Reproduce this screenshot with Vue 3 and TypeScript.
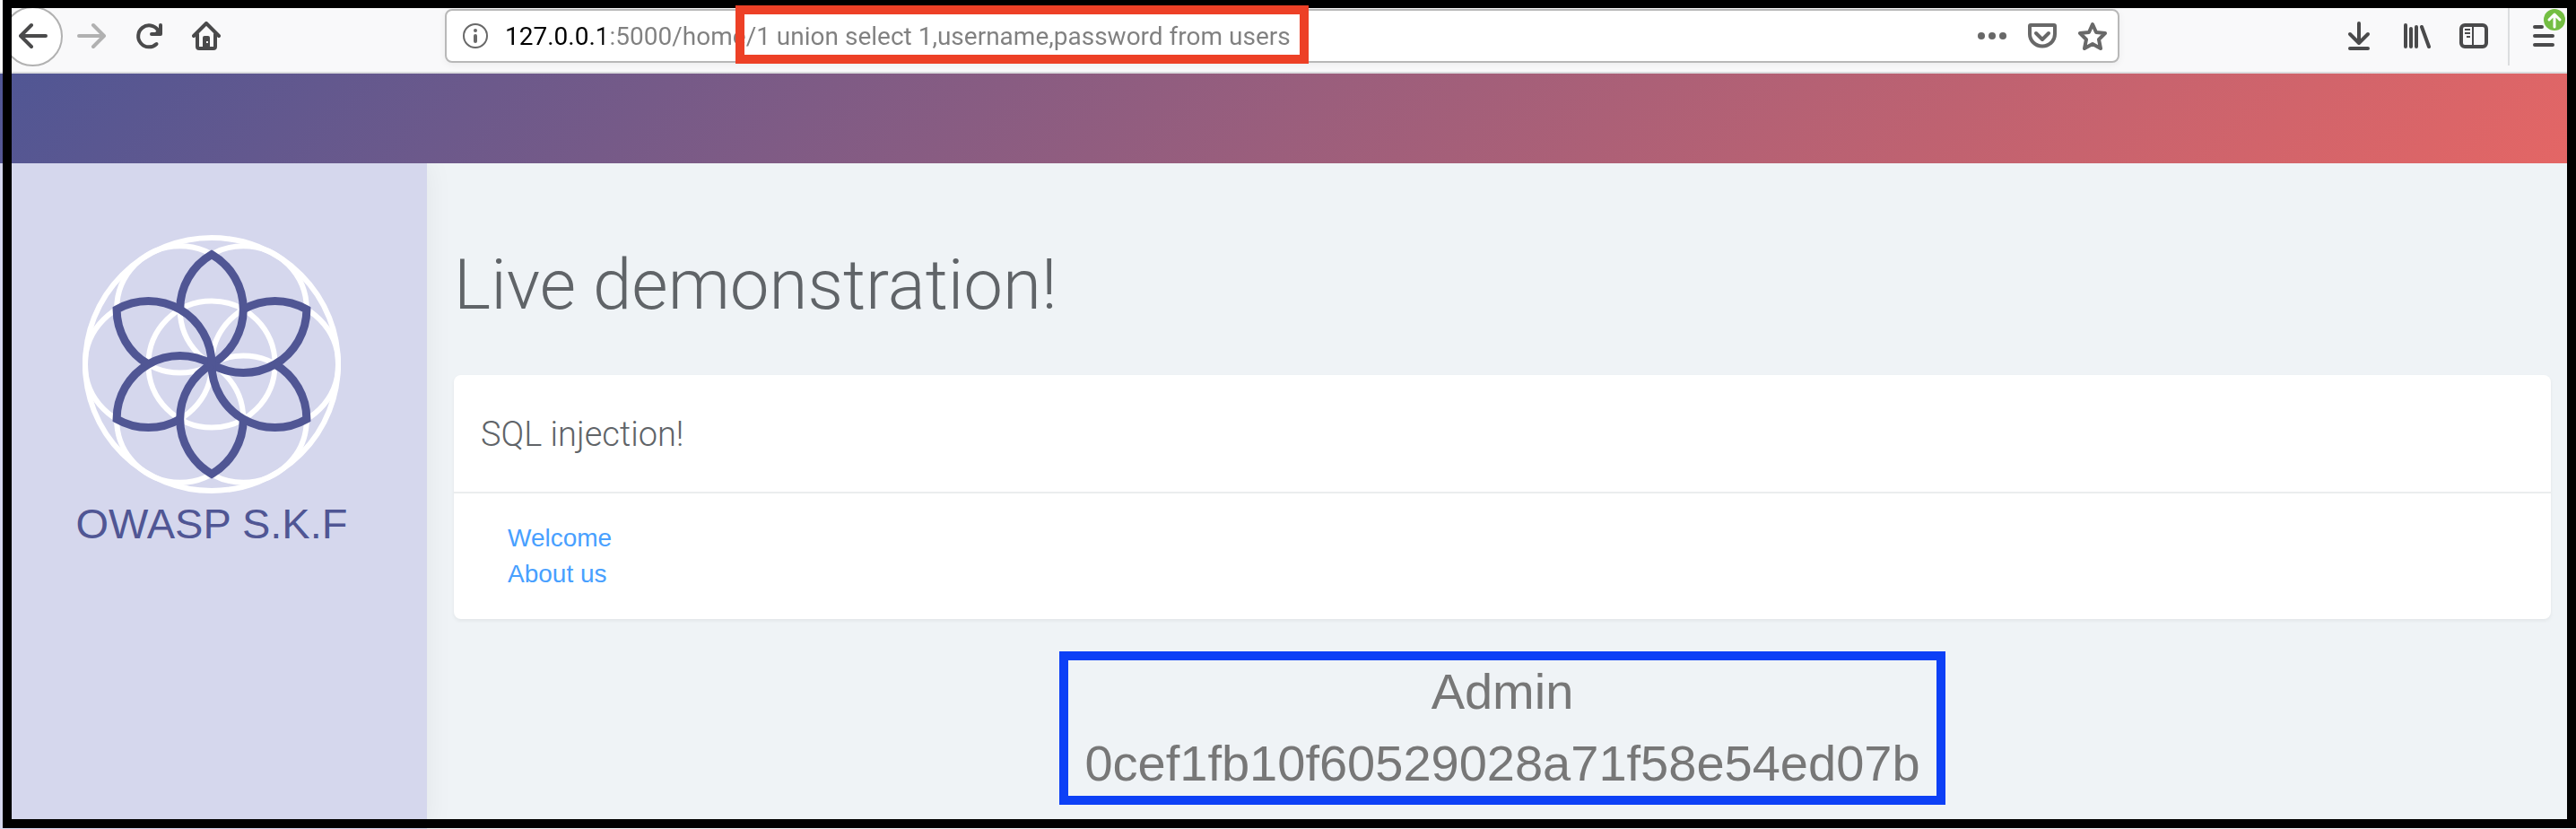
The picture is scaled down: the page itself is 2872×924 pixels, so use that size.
<script setup lang="ts">
import { ref } from 'vue'

interface MenuLink {
  label: string
  href: string
}

const address = ref('127.0.0.1:5000/home/1 union select 1,username,password from users')

const links: MenuLink[] = [
  { label: 'Welcome', href: '#welcome' },
  { label: 'About us', href: '#about' },
]

const record = {
  username: 'Admin',
  password: '0cef1fb10f60529028a71f58e54ed07b',
}

// Geometry of the flower: seven equal circles around one centre.
const radius = 70.6
const angles = [0, 60, 120, 180, 240, 300]
const petals = angles.map((angle) => ({
  angle,
  cx: radius * Math.cos((angle * Math.PI) / 180),
  cy: radius * Math.sin((angle * Math.PI) / 180),
}))
</script>

<template>
  <div class="window">
    <nav class="toolbar" aria-label="Browser toolbar">
      <button class="back" type="button" aria-label="Back">
        <svg class="icon" viewBox="0 0 32 32">
          <path class="line" d="M30 16H3M14 4 2 16l12 12" />
        </svg>
      </button>
      <button class="tool muted" type="button" aria-label="Forward" disabled>
        <svg class="icon" viewBox="0 0 32 32">
          <path class="line" d="M2 16h27M18 4l12 12-12 12" />
        </svg>
      </button>
      <button class="tool" type="button" aria-label="Reload">
        <svg class="icon" viewBox="0 0 32 32">
          <path class="line" d="M24.500 25A12 12 0 1 1 26 9.500M29 4v10H19" />
          <path d="M29 6v8h-8z" />
        </svg>
      </button>
      <button class="tool" type="button" aria-label="Home">
        <svg class="icon" viewBox="0 0 32 32">
          <path class="line" d="M2 16 16 2l14 14M6 14v14a2 2 0 0 0 2 2h16a2 2 0 0 0 2-2V14" />
          <path fill-rule="evenodd" d="M12 29V18a2 2 0 0 1 2-2h4a2 2 0 0 1 2 2v11zM16 22v2h2v-2z" />
        </svg>
      </button>

      <div class="address-bar">
        <button class="info" type="button" aria-label="Site information">
          <svg class="icon" viewBox="0 0 32 32">
            <circle class="thin" cx="16" cy="16" r="13" />
            <circle cx="16" cy="10" r="2" />
            <rect x="14" y="14" width="4" height="10" rx="2" />
          </svg>
        </button>
        <input v-model="address" class="address" type="text" aria-label="Address" spellcheck="false" />
        <button class="action" type="button" aria-label="Page actions">
          <svg class="icon" viewBox="0 0 32 32">
            <circle cx="4" cy="16" r="4" />
            <circle cx="16" cy="16" r="4" />
            <circle cx="28" cy="16" r="4" />
          </svg>
        </button>
        <button class="action" type="button" aria-label="Save to Pocket">
          <svg class="icon" viewBox="0 0 32 32">
            <path class="line" d="M3 4h26a1 1 0 0 1 1 1v9a14 13.500 0 0 1-28 0V5a1 1 0 0 1 1-1z" />
            <path class="line" d="m9 13 7 7 7-7" />
          </svg>
        </button>
        <button class="action" type="button" aria-label="Bookmark this page">
          <svg class="icon" viewBox="0 0 32 32">
            <path class="line" d="m16 3 4 9 10 1-7 7 2 10-9-5-9 5 2-10-7-7 10-1z" />
          </svg>
        </button>
        <span class="mark" aria-hidden="true"></span>
      </div>

      <button class="tool" type="button" aria-label="Downloads">
        <svg class="icon" viewBox="0 0 32 32">
          <path class="line" d="M16 2v22M6 14l10 10 10-10M6 30h20" />
        </svg>
      </button>
      <button class="tool" type="button" aria-label="Library">
        <svg class="icon" viewBox="0 0 32 32">
          <path class="line" d="M4 4v24M10 8v20M16 6v22M22 6l8 22" />
        </svg>
      </button>
      <button class="tool" type="button" aria-label="Sidebars">
        <svg class="icon" viewBox="0 0 32 32">
          <rect class="line" x="2" y="4" width="28" height="24" rx="4" />
          <path class="rule" d="M15 5v22M6 9h6M6 13h6M8 17h4" />
        </svg>
      </button>
      <span class="divider"></span>
      <button class="tool menu" type="button" aria-label="Menu, update available">
        <svg class="icon" viewBox="0 0 32 32">
          <path class="line" d="M6 6h8M6 16h20M6 26h20" />
        </svg>
        <svg class="badge" viewBox="0 0 24 24">
          <circle cx="12" cy="12" r="12" />
          <path d="M12 20V6M6 12l6-6 6 6" />
        </svg>
      </button>
    </nav>

    <header class="banner"></header>

    <div class="page">
      <aside class="sidebar">
        <svg class="logo" viewBox="-144 -144 288 288" role="img" aria-label="Flower logo">
          <g class="rings">
            <circle r="141" />
            <circle :r="radius" />
            <circle v-for="p in petals" :key="p.angle" :cx="p.cx" :cy="p.cy" :r="radius" />
          </g>
          <g class="petals">
            <path
              v-for="p in petals"
              :key="p.angle"
              :transform="`rotate(${p.angle})`"
              d="M0 0A70.600 70.600 0 0 0 0 -122.300A70.600 70.600 0 0 0 -35.300 -61.150"
            />
          </g>
        </svg>
        <div class="brand">OWASP S.K.F</div>
      </aside>

      <main class="content">
        <h1>Live demonstration!</h1>
        <section class="card">
          <h2>SQL injection!</h2>
          <ul>
            <li v-for="link in links" :key="link.label">
              <a :href="link.href">{{ link.label }}</a>
            </li>
          </ul>
        </section>
        <div class="result">
          <p>{{ record.username }}</p>
          <p>{{ record.password }}</p>
        </div>
      </main>
    </div>

    <div class="frame" aria-hidden="true"></div>
  </div>
</template>

<style>
body {
  margin: 0;
}
</style>

<style scoped>
.window {
  position: relative;
  display: flex;
  flex-direction: column;
  min-height: 100vh;
  background: #eff3f6;
  font-family: "Liberation Sans", Arial, sans-serif;
}

.frame {
  position: absolute;
  inset: 0 0 1px 3px;
  border: 10px solid #000;
  border-top-width: 9px;
  pointer-events: none;
}

/* Browser toolbar */
.toolbar {
  display: flex;
  align-items: center;
  height: 80px;
  padding: 0 4px 0 3px;
  border-bottom: 2px solid #dcdddf;
  background: #f9f9fa;
  color: #4a4a4b;
}

button {
  display: flex;
  flex: none;
  align-items: center;
  justify-content: center;
  padding: 0;
  border: 0;
  background: none;
  color: inherit;
}

.icon {
  width: 32px;
  height: 32px;
  fill: currentColor;
}

.line,
.thin,
.rule {
  fill: none;
  stroke: currentColor;
  stroke-width: 4;
  stroke-linecap: round;
  stroke-linejoin: round;
}

.thin,
.rule {
  stroke-width: 2;
}

.rule {
  stroke-linecap: butt;
}

.back {
  box-sizing: border-box;
  width: 67px;
  height: 67px;
  border: 2px solid #b1b1b1;
  border-radius: 50%;
  background: #fff;
}

.tool {
  width: 64px;
  height: 64px;
}

.muted {
  color: #b1b1b1;
}

.address-bar {
  position: relative;
  box-sizing: border-box;
  display: flex;
  flex: 1;
  align-items: center;
  height: 60px;
  margin: 0 235px 0 234px;
  border: 2px solid #b8b8b8;
  border-radius: 8px;
  background: #fff;
  box-shadow: 0 2px 8px rgba(0, 0, 0, 0.06);
  color: #686868;
}

.info {
  width: 64px;
  height: 56px;
}

.address {
  flex: 1;
  min-width: 0;
  height: 56px;
  padding: 0 0 0 1px;
  border: 0;
  outline: 0;
  background: linear-gradient(90deg, #000 111px, #808080 111px);
  background-clip: text;
  color: #808080;
  font: 28px Roboto, sans-serif;
  -webkit-text-fill-color: transparent;
}

.action {
  width: 56px;
  height: 56px;
}

.mark {
  position: absolute;
  top: -6px;
  left: 322px;
  box-sizing: border-box;
  width: 639px;
  height: 65px;
  border: 10px solid #ed4026;
  pointer-events: none;
  z-index: 2;
}

.divider {
  width: 2px;
  height: 66px;
  margin: 0 6px;
  background: #dcdddf;
}

.menu {
  position: relative;
}

.badge {
  position: absolute;
  top: 2px;
  right: 8px;
  width: 24px;
  height: 24px;
  fill: #74be43;
}

.badge path {
  fill: none;
  stroke: #fff;
  stroke-width: 3;
  stroke-linecap: round;
  stroke-linejoin: round;
}

/* Page */
.banner {
  height: 100px;
  background: linear-gradient(135deg, #505694, #e46665);
}

.page {
  display: flex;
  flex: 1;
}

.sidebar {
  box-sizing: border-box;
  display: flex;
  flex: none;
  flex-direction: column;
  align-items: center;
  width: 476px;
  padding: 80px 4px 0 0;
  background: #d5d7ed;
  box-shadow: 0 0 30px rgba(0, 0, 0, 0.06);
  clip-path: inset(0 -40px 0 0);
}

.logo {
  width: 288px;
  height: 288px;
  fill: none;
}

.rings {
  stroke: #fff;
  stroke-width: 6;
}

.petals {
  stroke: #505694;
  stroke-width: 9;
}

.brand {
  margin-top: 6px;
  color: #505694;
  font-size: 47px;
  line-height: 56px;
}

.content {
  flex: 1;
  min-width: 0;
  padding: 88px 28px 0 30px;
}

h1,
h2 {
  margin: 0;
  color: #606468;
  font-family: Roboto, sans-serif;
  font-weight: 300;
}

h1 {
  margin-bottom: 52px;
  font-size: 78px;
  line-height: 96px;
}

.card {
  border-radius: 8px;
  background: #fff;
  box-shadow: 0 2px 4px rgba(0, 0, 0, 0.06);
}

h2 {
  padding: 42px 30px 40px;
  border-bottom: 2px solid #ebedee;
  font-size: 38px;
  line-height: 48px;
}

ul {
  margin: 0;
  padding: 30px 60px;
  list-style: none;
  font-size: 28px;
  line-height: 40px;
}

a {
  color: #48a0ff;
  text-decoration: none;
}

.result {
  position: relative;
  width: fit-content;
  margin: 41px auto 0;
  color: #777;
  font-size: 56px;
  line-height: 80px;
  text-align: center;
}

.result::after {
  content: "";
  position: absolute;
  inset: -5px -28px -6px;
  border: 10px solid #0d40f6;
}

.result p {
  margin: 0;
}
</style>
